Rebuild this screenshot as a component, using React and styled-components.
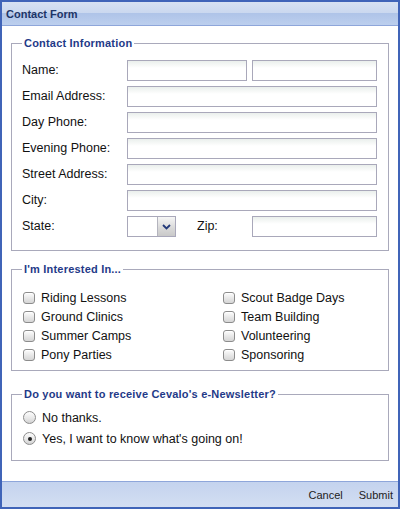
import React from 'react';
import styled, { createGlobalStyle } from 'styled-components';

const GlobalStyle = createGlobalStyle`
  html, body { margin: 0; padding: 0; background: #fff; }
  body { font-family: "Liberation Sans", Arial, sans-serif; }
`;

const Window = styled.div`
  width: 400px;
  height: 509px;
  box-sizing: border-box;
  border: 2px solid #4064b8;
  display: flex;
  flex-direction: column;
  background: #fff;
`;

const Header = styled.div`
  height: 23px;
  border-bottom: 1px solid #8ea6da;
  background: linear-gradient(#d7e1f2, #cad8ef 48%, #afc4e8 50%, #bccfee);
  display: flex;
  align-items: center;
  padding-left: 4px;
  font-weight: bold;
  font-size: 11px;
  color: #1d3567;
`;

const Body = styled.div`
  padding: 10px 9px 0 9px;
  display: flex;
  flex-direction: column;
`;

const Fieldset = styled.fieldset`
  margin: ${p => p.$top ?? 0}px 0 0 0;
  padding: ${p => p.$pt}px 11px ${p => p.$pb}px 10px;
  border: 1px solid #a9a9bb;
  min-width: 0;
`;

const Legend = styled.legend`
  padding: 0 2px;
  font-weight: bold;
  font-size: 11px;
  line-height: 14px;
  letter-spacing: 0.2px;
  color: #1f3a88;
`;

const FormGrid = styled.div`
  display: grid;
  grid-template-columns: 105px 1fr;
  row-gap: 5px;
  align-items: center;
`;

const Label = styled.label`
  font-size: 12.5px;
  color: #111;
  line-height: 21px;
`;

const Field = styled.div`
  display: flex;
  align-items: center;
  gap: ${p => p.$gap ?? 5}px;
`;

const TextInput = styled.input`
  box-sizing: border-box;
  height: 21px;
  width: ${p => (p.$w ? `${p.$w}px` : '100%')};
  flex: ${p => (p.$w ? 'none' : '1 1 0')};
  min-width: 0;
  border: 1px solid #a9a8ba;
  background: linear-gradient(#eaefec, #fff 7px);
  margin: 0;
  padding: 0 3px;
  font-size: 12px;
  outline: none;
`;

const Select = styled.div`
  box-sizing: border-box;
  flex: none;
  width: 49px;
  height: 21px;
  border: 1px solid #a9a8ba;
  display: flex;
  background: #fff;
`;

const SelectArrow = styled.div`
  margin-left: auto;
  width: 17px;
  border-left: 1px solid #b4b4be;
  background: linear-gradient(#f6f6f6, #d8d8d8 60%, #c9c9c9);
  display: flex;
  align-items: center;
  justify-content: center;
`;

const ZipLabel = styled(Label)`
  flex: none;
  width: 55px;
  margin-left: 21px;
`;

const CheckGrid = styled.div`
  display: grid;
  grid-template-columns: 200px 1fr;
  grid-auto-flow: column;
  grid-template-rows: repeat(4, 19px);
`;

const Option = styled.label`
  display: flex;
  align-items: center;
  gap: 6px;
  padding-left: 1px;
  font-size: 12.5px;
  color: #111;
  height: ${p => p.$h || 19}px;
`;

const Box = styled.span`
  box-sizing: border-box;
  width: 12px;
  height: 12px;
  border: 1px solid #8c8c8c;
  border-radius: 3px;
  background: linear-gradient(#fdfdfd, #e4e4e4 60%, #d6d6d6);
  box-shadow: inset 0 1px 0 #fff;
`;

const Radio = styled.span`
  box-sizing: border-box;
  width: 13px;
  height: 13px;
  border: 1px solid #8c8c8c;
  border-radius: 50%;
  background: linear-gradient(#fdfdfd, #e6e6e6 60%, #d2d2d2);
  display: flex;
  align-items: center;
  justify-content: center;
  &::after {
    content: '';
    width: 4px;
    height: 4px;
    border-radius: 50%;
    background: ${p => (p.$checked ? '#222' : 'transparent')};
  }
`;

const Footer = styled.div`
  margin-top: auto;
  height: 25px;
  border-top: 1px solid #8ea6da;
  background: linear-gradient(#c4d3ee, #d3def2);
  display: flex;
  align-items: center;
  justify-content: flex-end;
  gap: 16px;
  padding-right: 5px;
`;

const FooterButton = styled.span`
  font-size: 11px;
  color: #222;
`;

const interests = [
  'Riding Lessons',
  'Ground Clinics',
  'Summer Camps',
  'Pony Parties',
  'Scout Badge Days',
  'Team Building',
  'Volunteering',
  'Sponsoring',
];

export default function App() {
  return (
    <>
      <GlobalStyle />
      <Window>
        <Header>Contact Form</Header>
        <Body>
          <Fieldset $pt={10} $pb={13}>
            <Legend>Contact Information</Legend>
            <FormGrid>
              <Label>Name:</Label>
              <Field>
                <TextInput $w={120} />
                <TextInput />
              </Field>
              <Label>Email Address:</Label>
              <TextInput />
              <Label>Day Phone:</Label>
              <TextInput />
              <Label>Evening Phone:</Label>
              <TextInput />
              <Label>Street Address:</Label>
              <TextInput />
              <Label>City:</Label>
              <TextInput />
              <Label>State:</Label>
              <Field $gap={0}>
                <Select>
                  <SelectArrow>
                    <svg width="9" height="6" viewBox="0 0 9 6">
                      <path d="M1 1 L4.5 4.5 L8 1" fill="none" stroke="#23397a" strokeWidth="1.8" />
                    </svg>
                  </SelectArrow>
                </Select>
                <ZipLabel>Zip:</ZipLabel>
                <TextInput />
              </Field>
            </FormGrid>
          </Fieldset>

          <Fieldset $top={11} $pt={12} $pb={6}>
            <Legend>I'm Interested In...</Legend>
            <CheckGrid>
              {interests.map(item => (
                <Option key={item}>
                  <Box />
                  {item}
                </Option>
              ))}
            </CheckGrid>
          </Fieldset>

          <Fieldset $top={16} $pt={6} $pb={11}>
            <Legend>Do you want to receive Cevalo's e-Newsletter?</Legend>
            <Option $h={21}>
              <Radio />
              No thanks.
            </Option>
            <Option $h={21}>
              <Radio $checked />
              Yes, I want to know what's going on!
            </Option>
          </Fieldset>
        </Body>
        <Footer>
          <FooterButton>Cancel</FooterButton>
          <FooterButton>Submit</FooterButton>
        </Footer>
      </Window>
    </>
  );
}
